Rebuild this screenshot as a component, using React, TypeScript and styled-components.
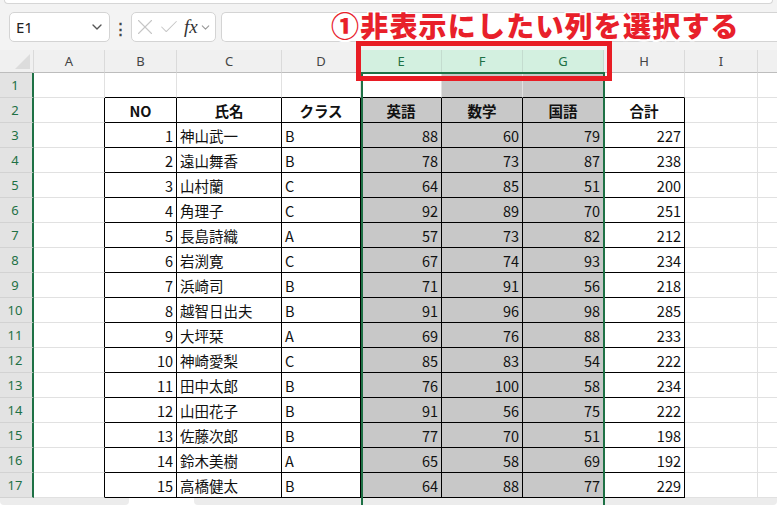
import styled, { createGlobalStyle } from "styled-components";
import { X, Check, ChevronDown } from "lucide-react";

const GlobalStyle = createGlobalStyle`
  body {
    margin: 0;
    font-family: "Noto Sans CJK JP", "Noto Sans", sans-serif;
    background: #ffffff;
  }
`;

const GREEN = "#1e7145";
const GRID = "#e1e1e1";
const WIDTHS = [34, 71, 72, 105, 79, 81, 81, 81, 81, 73, 40];
const LETTERS = ["A", "B", "C", "D", "E", "F", "G", "H", "I", ""];

type Row = [number, string, string, number, number, number, number];

const rows: Row[] = [
  [1, "神山武一", "B", 88, 60, 79, 227],
  [2, "遠山舞香", "B", 78, 73, 87, 238],
  [3, "山村蘭", "C", 64, 85, 51, 200],
  [4, "角理子", "C", 92, 89, 70, 251],
  [5, "長島詩織", "A", 57, 73, 82, 212],
  [6, "岩渕寛", "C", 67, 74, 93, 234],
  [7, "浜崎司", "B", 71, 91, 56, 218],
  [8, "越智日出夫", "B", 91, 96, 98, 285],
  [9, "大坪栞", "A", 69, 76, 88, 233],
  [10, "神崎愛梨", "C", 85, 83, 54, 222],
  [11, "田中太郎", "B", 76, 100, 58, 234],
  [12, "山田花子", "B", 91, 56, 75, 222],
  [13, "佐藤次郎", "B", 77, 70, 51, 198],
  [14, "鈴木美樹", "A", 65, 58, 69, 192],
  [15, "高橋健太", "B", 64, 88, 77, 229],
];

const Window = styled.div`
  position: relative;
  width: 777px;
  height: 505px;
  overflow: hidden;
  background: #f3f3f3;
`;

const RibbonEdge = styled.div`
  height: 3px;
  margin: 0 4px;
  background: #ffffff;
  border: 1px solid #d6d6d6;
  border-top: none;
  border-radius: 0 0 6px 6px;
`;

const FormulaBar = styled.div`
  display: flex;
  align-items: center;
  height: 46px;
  padding: 0 0 0 9px;
  box-sizing: border-box;
`;

const Box = styled.div<{ $width?: number }>`
  display: flex;
  align-items: center;
  height: 30px;
  box-sizing: border-box;
  background: #ffffff;
  border: 1px solid #d4d4d4;
  border-radius: 5px;
  ${(p) => (p.$width ? `width: ${p.$width}px;` : "flex: 1;")}
  & > svg {
    flex-shrink: 0;
  }
`;

const InputBox = styled(Box)`
  margin-left: 5px;
  border-right: none;
  border-radius: 5px 0 0 5px;
`;

const NameText = styled.span`
  flex: 1;
  padding-left: 6px;
  font-family: "Noto Sans", sans-serif;
  font-size: 15px;
  color: #222;
`;

const Dots = styled.span`
  width: 21px;
  text-align: center;
  font-size: 15px;
  font-weight: bold;
  color: #444;
`;

const FxText = styled.span`
  font-family: "Liberation Serif", serif;
  font-style: italic;
  font-size: 19px;
  color: #333;
  margin: 0 1px 0 4px;
`;

const Sheet = styled.div`
  position: relative;
  display: grid;
  grid-template-columns: ${WIDTHS.map((w) => `${w}px`).join(" ")};
  grid-template-rows: 23px;
  grid-auto-rows: 25px;
  background: #ffffff;
`;

const Corner = styled.div`
  position: relative;
  background: #f0f0f0;
  border-bottom: 1px solid #bdbdbd;
  border-right: 1px solid #dadada;
  &::after {
    content: "";
    position: absolute;
    right: 3px;
    bottom: 3px;
    border-left: 15px solid transparent;
    border-bottom: 15px solid #dcdcdc;
  }
`;

const ColHead = styled.div<{ $selected?: boolean }>`
  display: flex;
  align-items: center;
  justify-content: center;
  font-family: "Noto Sans", sans-serif;
  font-size: 13px;
  color: ${(p) => (p.$selected ? GREEN : "#444")};
  background: ${(p) => (p.$selected ? "#d3f0e0" : "#f0f0f0")};
  border-right: 1px solid ${(p) => (p.$selected ? "#c4dccf" : "#dadada")};
  border-bottom: 1px solid #bdbdbd;
`;

const RowHead = styled.div`
  display: flex;
  align-items: center;
  justify-content: center;
  padding-right: 2px;
  font-family: "Noto Sans", sans-serif;
  font-size: 13px;
  color: ${GREEN};
  background: #e3e3e3;
  border-right: 2px solid ${GREEN};
  border-bottom: 1px solid #d2d2d2;
`;

const Cell = styled.div<{
  $right: string;
  $bottom: string;
  $fill?: boolean;
  $align?: "left" | "right" | "center";
  $bold?: boolean;
}>`
  display: flex;
  align-items: center;
  justify-content: ${(p) =>
    p.$align === "right" ? "flex-end" : p.$align === "center" ? "center" : "flex-start"};
  padding: 0 3px;
  overflow: hidden;
  white-space: nowrap;
  font-size: 14.5px;
  font-weight: ${(p) => (p.$bold ? 700 : 400)};
  color: #111;
  background: ${(p) => (p.$fill ? "#c8c8c8" : "#ffffff")};
  border-right: 1px solid ${(p) => p.$right};
  border-bottom: 1px solid ${(p) => p.$bottom};
`;

const Selection = styled.div`
  position: absolute;
  left: 361px;
  top: 22px;
  width: 244px;
  height: 500px;
  box-sizing: border-box;
  border: 2px solid ${GREEN};
  pointer-events: none;
`;

const BottomBar = styled.div`
  display: flex;
  height: 7px;
  background: #ffffff;
`;

const BarPiece = styled.div<{ $width?: number }>`
  background: #ececec;
  border-radius: 0 0 4px 4px;
  ${(p) => (p.$width ? `width: ${p.$width}px;` : "flex: 1;")}
`;

const Gap = styled.div`
  width: 65px;
`;

const Callout = styled.div`
  position: absolute;
  left: 331px;
  top: 5px;
  font-size: 28px;
  font-weight: 900;
  letter-spacing: 1.2px;
  color: #e8202a;
  text-shadow:
    -1.5px -1.5px 0 #fff,
    1.5px -1.5px 0 #fff,
    -1.5px 1.5px 0 #fff,
    1.5px 1.5px 0 #fff,
    0 2px 0 #fff,
    2px 0 0 #fff;
`;

const CalloutFrame = styled.div`
  position: absolute;
  left: 356px;
  top: 41px;
  width: 256px;
  height: 40px;
  box-sizing: border-box;
  border: 5px solid #e81c24;
`;

function borderRight(r: number, c: number) {
  if (r >= 2 && r <= 17 && c >= 1 && c <= 8) return "#000";
  return GRID;
}

function borderBottom(r: number, c: number) {
  if (r >= 1 && r <= 17 && c >= 2 && c <= 8) return "#000";
  return GRID;
}

function cellValue(r: number, c: number): { text: string; align: "left" | "right" | "center"; bold?: boolean } {
  if (r === 2) {
    const heads = ["", "NO", "氏名", "クラス", "英語", "数学", "国語", "合計"];
    return { text: heads[c - 1] ?? "", align: "center", bold: true };
  }
  const row = rows[r - 3];
  if (!row || c < 2 || c > 8) return { text: "", align: "left" };
  const v = row[c - 2];
  return { text: String(v), align: typeof v === "number" ? "right" : "left" };
}

export default function App() {
  const rowNums = Array.from({ length: 17 }, (_, i) => i + 1);
  const cols = Array.from({ length: 10 }, (_, i) => i + 1);

  return (
    <Window>
      <GlobalStyle />
      <RibbonEdge />
      <FormulaBar>
        <Box $width={101}>
          <NameText>E1</NameText>
          <ChevronDown size={16} color="#555" style={{ marginRight: 4 }} />
        </Box>
        <Dots>⋮</Dots>
        <Box $width={85}>
          <X size={26} color="#c6c6c6" strokeWidth={1} />
          <Check size={22} color="#c6c6c6" strokeWidth={1.1} />
          <FxText>fx</FxText>
          <ChevronDown size={13} color="#999" />
        </Box>
        <InputBox />
      </FormulaBar>
      <Sheet>
        <Corner />
        {LETTERS.map((l, i) => (
          <ColHead key={i} $selected={i >= 4 && i <= 6}>
            {l}
          </ColHead>
        ))}
        {rowNums.map((r) => [
          <RowHead key={`h${r}`}>{r}</RowHead>,
          ...cols.map((c) => {
            const v = cellValue(r, c);
            const fill = c >= 5 && c <= 7 && (r >= 2 || c !== 5);
            return (
              <Cell
                key={`${r}-${c}`}
                $right={borderRight(r, c)}
                $bottom={borderBottom(r, c)}
                $fill={fill}
                $align={v.align}
                $bold={v.bold}
              >
                {v.text}
              </Cell>
            );
          }),
        ])}
        <Selection />
      </Sheet>
      <BottomBar>
        <BarPiece $width={129} />
        <Gap />
        <BarPiece />
      </BottomBar>
      <Callout>①非表示にしたい列を選択する</Callout>
      <CalloutFrame />
    </Window>
  );
}
